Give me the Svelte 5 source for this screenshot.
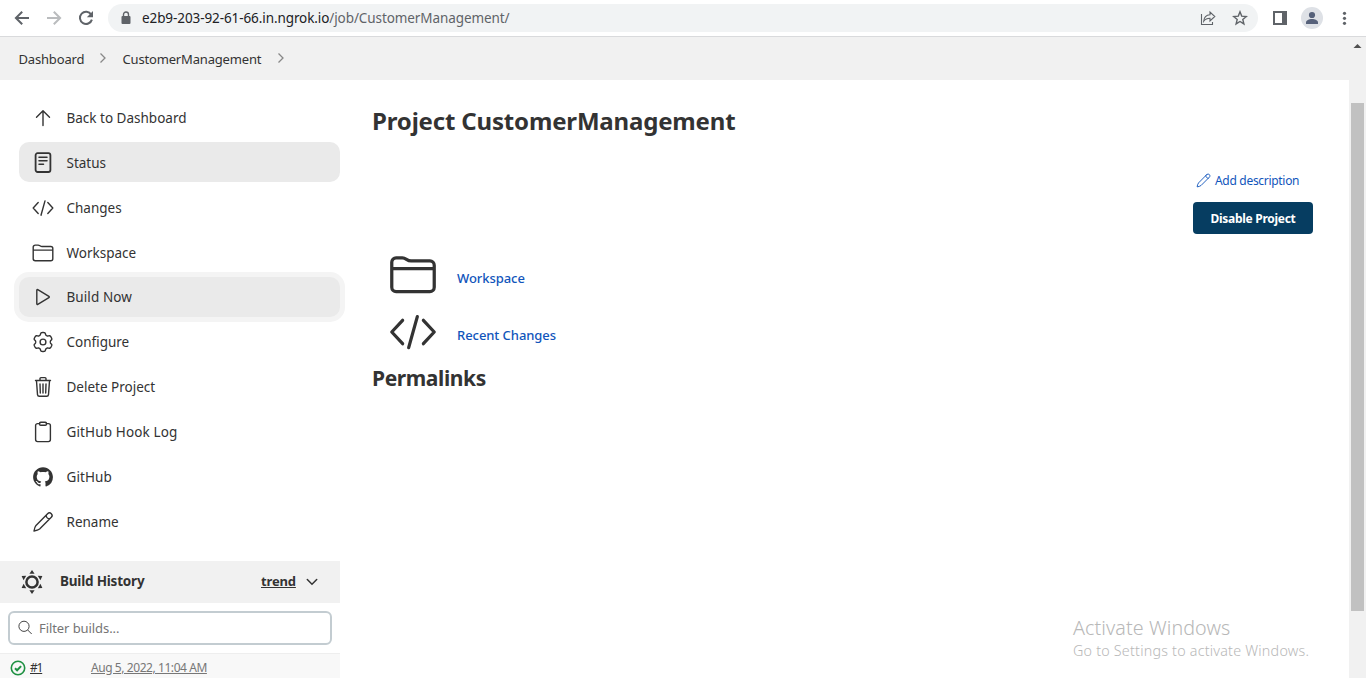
<script>
  const gear = (() => {
    let d = '';
    for (let i = 0; i < 120; i++) {
      const t = (i / 120) * Math.PI * 2;
      const r = 8.35 + 1.1 * Math.tanh(2.2 * (Math.cos(6 * t) + 0.25));
      d += `${i ? 'L' : 'M'}${(12 + r * Math.sin(t)).toFixed(2)} ${(12 - r * Math.cos(t)).toFixed(2)}`;
    }
    return d + 'Z';
  })();

  const tasks = [
    { label: 'Back to Dashboard', icon: 'up', cls: 'back' },
    { label: 'Status', icon: 'status', cls: 'active status' },
    { label: 'Changes', icon: 'code', cls: 'changes' },
    { label: 'Workspace', icon: 'folder', cls: 'workspace' },
    { label: 'Build Now', icon: 'play', cls: 'active ring build' },
    { label: 'Configure', icon: 'gear', cls: 'configure' },
    { label: 'Delete Project', icon: 'trash', cls: 'delete' },
    { label: 'GitHub Hook Log', icon: 'clipboard', cls: 'hook' },
    { label: 'GitHub', icon: 'github', cls: 'github' },
    { label: 'Rename', icon: 'pencil', cls: 'rename' },
  ];
</script>

{#snippet glyph(name)}
  <svg class="glyph" viewBox="0 0 24 24">
    {#if name === 'up'}
      <path d="M12 19.500V5M5.500 11.300 12 4.800l6.500 6.500" />
    {:else if name === 'status'}
      <rect x="4.600" y="2.200" width="14.800" height="18.800" rx="2" stroke-width="1.800" />
      <path d="M8 6.300h8M8 9.700h8M8 13.200h4.500" stroke-width="1.500" />
    {:else if name === 'code'}
      <path d="M7.200 6.600 2.200 12l5 5.400M16.800 6.600l5 5.400-5 5.400M14 4.900 10 19.200" />
    {:else if name === 'folder'}
      <path d="M2.200 17.700V6.100a2 2 0 0 1 2-2h2.900c1.800 0 2 1.400 4 1.400h8.700a2 2 0 0 1 2 2v10.200a2 2 0 0 1-2 2H4.200a2 2 0 0 1-2-2zM2.200 9.100h19.600" />
    {:else if name === 'play'}
      <path d="M5.800 5.300v13.400c0 .6.5.9 1 .6l11.100-6.700c.5-.3.5-.9 0-1.200L6.800 4.700c-.5-.3-1 0-1 .6z" />
    {:else if name === 'gear'}
      <path d={gear} /><circle cx="12" cy="12" r="2.900" />
    {:else if name === 'trash'}
      <path d="M5.500 6l1 13.600a1.800 1.800 0 0 0 1.800 1.600h7.400a1.800 1.800 0 0 0 1.800-1.600l1-13.600M4.500 5.500h15M9 5.300V3.600c0-.6.4-1 1-1h4c.6 0 1 .4 1 1v1.700M12 9v9M9 9l.3 9M15 9l-.3 9" />
    {:else if name === 'clipboard'}
      <path d="M8.700 3.600H6.600a2 2 0 0 0-2 2v14a2 2 0 0 0 2 2h10.800a2 2 0 0 0 2-2v-14a2 2 0 0 0-2-2h-2.100" />
      <rect x="8.500" y="2.200" width="7" height="3" rx="1.200" />
    {:else if name === 'github'}
      <path class="solid" transform="translate(2.1 2.2) scale(1.24)" d="M8 0C3.58 0 0 3.58 0 8c0 3.54 2.29 6.53 5.47 7.59.4.07.55-.17.55-.38 0-.19-.01-.82-.01-1.49-2.01.37-2.53-.49-2.69-.94-.09-.23-.48-.94-.82-1.13-.28-.15-.68-.52-.01-.53.63-.01 1.08.58 1.23.82.72 1.21 1.87.87 2.33.66.07-.52.28-.87.51-1.07-1.78-.2-3.64-.89-3.64-3.95 0-.87.31-1.59.82-2.15-.08-.2-.36-1.02.08-2.12 0 0 .67-.21 2.2.82.64-.18 1.32-.27 2-.27s1.36.09 2 .27c1.53-1.04 2.2-.82 2.2-.82.44 1.1.16 1.92.08 2.12.51.56.82 1.27.82 2.15 0 3.07-1.87 3.75-3.65 3.95.29.25.54.73.54 1.48 0 1.07-.01 1.93-.01 2.2 0 .21.15.46.55.38A8.01 8.01 0 0 0 16 8c0-4.42-3.58-8-8-8z" />
    {:else if name === 'pencil'}
      <path d="M16.600 3.700 5 15.400C3.800 16.900 3.300 19 3 21c2-.3 4.100-.8 5.600-2L20.300 7.300c1-1 1-2.600 0-3.600s-2.700-1-3.700 0zM15.200 5.200c0 2 1.600 3.600 3.600 3.600" />
    {/if}
  </svg>
{/snippet}

<div class="window">
  <header class="toolbar">
    <svg class="nav" viewBox="0 0 108 36" aria-hidden="true">
      <g fill="none" stroke="#5f6368" stroke-width="2">
        <path d="M29 18H16.500M22.200 11.700 15.900 18l6.300 6.300" />
        <path d="M47 18h12.500M53.800 11.700l6.300 6.300-6.300 6.300" stroke="#babcbe" />
        <path d="M91.200 14.600A6.100 6.100 0 1 0 91.900 19.600" />
      </g>
      <path d="M93 11v6.200h-6.200z" fill="#5f6368" />
    </svg>
    <div class="omnibox">
      <svg width="10" height="14" viewBox="0 0 10 14"><path d="M1.500 5h7a1 1 0 0 1 1 1v6a1 1 0 0 1-1 1h-7a1 1 0 0 1-1-1V6a1 1 0 0 1 1-1z" fill="#5f6368" /><path d="M2.500 5.500v-2a2.500 2.500 0 0 1 5 0v2" fill="none" stroke="#5f6368" stroke-width="1.400" /></svg>
      <span class="url">e2b9-203-92-61-66.in.ngrok.io<i>/job/CustomerManagement/</i></span>
      <svg class="share" width="16" height="16" viewBox="0 0 16 16" fill="none" stroke="#5f6368" stroke-width="1.100"><path d="M1.500 4v10.500h11V12M3.700 11.300c.3-4 2.600-6.300 6.300-6.500V2l4.800 4.500L10 11V8.200c-3 0-4.800.9-6.300 3.100z" /></svg>
      <svg width="16" height="16" viewBox="0 0 16 16" fill="none" stroke="#5f6368" stroke-width="1.400"><path d="m8 1.800 1.700 4.300 4.600.4-3.500 2.900 1.100 4.500L8 11.500l-3.900 2.400 1.100-4.500-3.500-2.900 4.600-.4z" /></svg>
    </div>
    <svg class="tools" viewBox="0 0 108 36">
      <path d="M16 12h11v12H16z" fill="none" stroke="#5f6368" stroke-width="2" /><path d="M24 11h5v14h-5z" fill="#5f6368" />
      <circle cx="54" cy="18" r="11" fill="#dee1e6" />
      <circle cx="54" cy="15" r="3.100" fill="#56617a" /><path d="M48 24v-1.500c0-2.300 3-3.500 6-3.500s6 1.200 6 3.500V24z" fill="#56617a" />
      <g fill="#5f6368"><circle cx="86.500" cy="13.300" r="1.600" /><circle cx="86.500" cy="18.300" r="1.600" /><circle cx="86.500" cy="23.300" r="1.600" /></g>
    </svg>
  </header>

  <div class="viewport">
    <div class="page">
      <nav class="crumbs">
        <span class="c1">Dashboard</span>
        <svg width="8" height="12" viewBox="0 0 8 12"><path d="m1.500 1.500 4.500 4.500-4.500 4.500" /></svg>
        <span class="c2">CustomerManagement</span>
        <svg width="8" height="12" viewBox="0 0 8 12"><path d="m1.500 1.500 4.500 4.500-4.500 4.500" /></svg>
      </nav>
      <div class="columns">
        <aside>
          <div class="tasks">
            {#each tasks as task}
              <div class="task {task.cls}">{@render glyph(task.icon)}<span>{task.label}</span></div>
            {/each}
          </div>
          <section class="history">
            <div class="history-head">
              <svg width="24" height="26" viewBox="-12 -13 24 26">
                <circle r="5.600" fill="none" stroke="#333" stroke-width="2.500" />
                {#each [0, 60, 120, 180, 240, 300] as angle}
                  <path d="M0-12 2.600-8.200h-5.200z" fill="#333" transform="rotate({angle})" />
                {/each}
              </svg>
              <b class="title">Build History</b>
              <b class="trend">trend</b>
              <svg width="12" height="8" viewBox="0 0 12 8"><path d="m1.300 1.500 4.700 4.700 4.700-4.700" fill="none" stroke="#333" stroke-width="1.500" stroke-linecap="round" /></svg>
            </div>
            <div class="search-wrap">
              <div class="search">
                <svg width="15" height="15" viewBox="0 0 15 15" fill="none" stroke="#444" stroke-width="1"><circle cx="6" cy="6.300" r="5.100" /><path d="m9.700 10 4 4" /></svg>
                <span>Filter builds...</span>
              </div>
            </div>
            <div class="build-row">
              <svg width="16" height="16" viewBox="0 0 16 16" fill="none" stroke="#1e9142"><circle cx="8" cy="8" r="6.700" stroke-width="1.600" /><path d="m5 8.300 2.100 2 4-4.200" stroke-width="2" /></svg>
              <span class="num">#1</span><span class="date">Aug 5, 2022, 11:04 AM</span>
            </div>
          </section>
        </aside>
        <main>
          <h1><span>Project CustomerManagement</span></h1>
          <div class="actions">
            <div class="describe">{@render glyph('pencil')}<span>Add description</span></div>
            <div class="button"><span>Disable Project</span></div>
          </div>
          <div class="links">
            <div class="link">{@render glyph('folder')}<span class="l1">Workspace</span></div>
            <div class="link">{@render glyph('code')}<span class="l2">Recent Changes</span></div>
          </div>
          <h2><span>Permalinks</span></h2>
        </main>
      </div>
    </div>
    <div class="scrollbar">
      <svg width="9" height="5" viewBox="0 0 9 5"><path d="M.5 5 4.500 1 8.500 5z" fill="#505050" /></svg>
      <div class="thumb"></div>
    </div>
  </div>
  <div class="watermark"><p class="w1"><span>Activate Windows</span></p><p class="w2"><span>Go to Settings to activate Windows.</span></p></div>
</div>

<style>
  :global(body) { background: #fff; }
  .window { position: relative; width: 1366px; height: 678px; overflow: hidden; display: flex; flex-direction: column; box-sizing: border-box; background: #fff; color: #333; font-family: "Noto Sans", "Open Sans", sans-serif; font-size: 13px; white-space: nowrap; }
  .window :global(*) { box-sizing: border-box; }
  svg { display: block; flex: none; }
  .toolbar { height: 37px; flex: none; display: flex; border-bottom: 1px solid #d9dadc; }
  .nav, .tools { width: 108px; height: 36px; }
  .omnibox { width: 1150px; height: 28px; margin-top: 4px; border-radius: 14px; background: #f1f3f4; display: flex; align-items: center; padding: 0 10px 0 13px; }
  .url { margin-left: 11px; font-size: 13.500px; color: #202124; flex: 1; letter-spacing: -0.090px; }
  .url i { font-style: normal; color: #5f6368; }
  .share { margin-right: 16px; }
  .viewport { flex: 1; min-height: 0; display: flex; }
  .page { width: 1349px; display: flex; flex-direction: column; }
  .crumbs { height: 43px; flex: none; background: #f1f1f1; display: flex; align-items: center; padding-left: 18.500px; font-weight: 400; }
  .crumbs span { font-size: 13px; letter-spacing: -0.170px; }
  .c1 { width: 80px; }
  .c2 { width: 154px; margin-left: 16px; }
  .crumbs svg { margin-bottom: 2px; }
  .crumbs svg path { fill: none; stroke: #888; stroke-width: 1.300; }
  .columns { display: flex; flex: 1; min-height: 0; }
  aside { width: 340px; padding-top: 17.400px; flex: none; }
  .tasks { padding-left: 19px; display: flex; flex-direction: column; gap: 4.900px; }
  .task { height: 40px; width: 321px; border-radius: 10px; padding-left: 12px; display: flex; align-items: center; font-weight: 400; font-size: 13.500px; letter-spacing: 0; }
  .task:nth-child(-n+4) span, .task:last-child span { padding-top: 2px; }
  .task svg { width: 24px; height: 24px; margin-right: 11.500px; }
  .task:nth-child(-n+4) svg, .task:last-child svg { margin-top: 1.200px; }
  .hook { letter-spacing: 0.140px; }
  .build, .github { letter-spacing: 0.080px; }
  .active { background: #eaeaea; }
  .ring { box-shadow: 0 0 0 5px #f4f4f4; }
  .glyph { fill: none; stroke: currentColor; stroke-width: 1.400; stroke-linecap: round; stroke-linejoin: round; }
  .solid { fill: currentColor; stroke: none; }
  .history { margin-top: 19.500px; }
  .history-head { height: 42px; background: #f1f1f1; display: flex; align-items: center; padding: 0 22px 0 20px; }
  .title { margin-left: 16px; width: 201px; font-size: 13.500px; letter-spacing: -0.200px; padding-bottom: 2px; }
  .trend { width: 45px; text-decoration: underline; font-size: 13px; letter-spacing: -0.150px; padding-bottom: 2px; }
  .search-wrap { padding: 8px 8px 8px; height: 50px; }
  .search { height: 34px; width: 324px; border: 2px solid #c3ccd1; border-radius: 6px; display: flex; align-items: center; padding-left: 8px; color: #757575; font-size: 13px; letter-spacing: -0.080px; }
  .search span { margin-left: 6px; }
  .build-row { border-top: 1px solid #eee; background: #f8f8f8; height: 30px; padding-left: 10px; display: flex; align-items: center; font-size: 12px; letter-spacing: -0.430px; }
  .num, .date { text-decoration: underline; margin-bottom: 2px; }
  .num { margin-left: 4px; width: 61px; letter-spacing: -1.200px; }
  .date { color: #777; }
  main { flex: 1; padding: 24px 36px 0 32px; display: flex; flex-direction: column; }
  h1, h2, p { margin: 0; }
  h1 { font-size: 24px; line-height: 34px; letter-spacing: -0.170px; }
  h2 { font-size: 21px; line-height: 30px; margin-top: 2px; letter-spacing: -0.400px; }
  .actions { margin-top: 33px; display: flex; flex-direction: column; align-items: flex-end; }
  .describe { width: 118px; height: 20px; display: flex; align-items: center; color: #1155bb; font-size: 12px; font-weight: 400; letter-spacing: -0.300px; }
  .describe svg { width: 17px; height: 17px; margin: 0 3.500px 2px -0.500px; stroke-width: 1.300; }
  .describe span { padding-bottom: 2px; }
  .button { margin-top: 11px; width: 120px; height: 32px; border-radius: 4px; background: #063d61; color: #fff; display: flex; align-items: center; justify-content: center; font-size: 12px; font-weight: 700; letter-spacing: -0.280px; }
  .links { padding: 13px 0 0 15px; }
  .link { height: 57px; display: flex; align-items: center; color: #1155bb; font-size: 13px; font-weight: 500; letter-spacing: -0.060px; }
  .link span { padding-top: 4px; }
  .link svg { width: 52px; height: 52px; margin: 0 18px 1px 0; color: #333; stroke-width: 1.500; }
  .watermark { position: absolute; left: 1073px; top: 614px; color: #b8b8b8; font-weight: 350; }
  .w1 { font-size: 19.700px; line-height: 27px; letter-spacing: 0.090px; }
  .w2 { font-size: 14.300px; line-height: 18px; letter-spacing: 0.220px; margin-top: 1px; }
  .scrollbar { width: 17px; background: #f1f1f1; display: flex; flex-direction: column; align-items: center; padding-top: 6px; }
  .thumb { margin-top: 55px; margin-right: 1px; width: 13px; height: 508px; background: #c1c1c1; }
</style>
